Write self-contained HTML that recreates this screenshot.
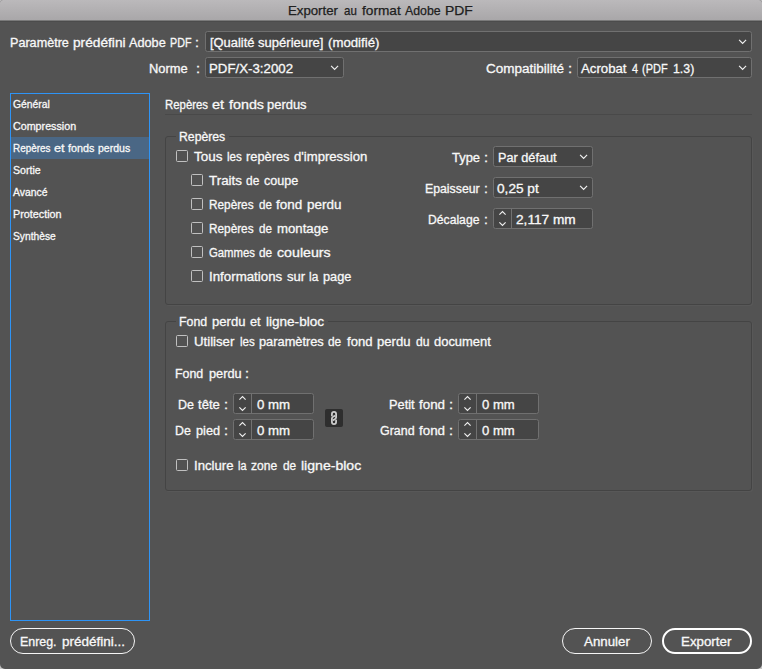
<!DOCTYPE html>
<html lang="fr">
<head>
<meta charset="utf-8">
<title>Exporter au format Adobe PDF</title>
<style>
html,body{margin:0;padding:0;}
body{width:762px;height:669px;overflow:hidden;background:#c4c4c4;font-family:"Liberation Sans",sans-serif;}
#win{position:absolute;left:0;top:0;width:762px;height:669px;background:#535353;border-radius:3px 3px 5px 5px;overflow:hidden;}
#tb{position:absolute;left:0;top:0;width:762px;height:20px;background:linear-gradient(#bbb9bb,#a9a7a9);}
#tb1{position:absolute;left:0;top:20px;width:762px;height:1px;background:#7a7a7a;}
#tb2{position:absolute;left:0;top:21px;width:762px;height:1px;background:#4c4c4c;}
.t{position:absolute;white-space:nowrap;line-height:16px;height:16px;color:#f8f8f8;transform-origin:0 0;-webkit-text-stroke:0.3px #f8f8f8;}
.tt{-webkit-text-stroke:0.25px #202020;}
.sel,.inp{position:absolute;box-sizing:border-box;height:21px;background:#454545;border:1px solid #707070;border-radius:2.5px;}
.chev{position:absolute;right:3px;top:7px;width:10px;height:7px;}
.chev path,.spin path{fill:none;stroke:#f0f0f0;stroke-width:1.15;}
.spin{position:absolute;left:0;top:0;width:17px;height:19px;border-right:1px solid #727272;}
.spin svg{display:block;}
.cb{position:absolute;width:12px;height:12px;box-sizing:border-box;border:1px solid #c0c0c0;border-radius:1.5px;background:#525252;}
.grp{position:absolute;box-sizing:border-box;border:1px solid #444;border-radius:3px;box-shadow:1px 1px 0 rgba(255,255,255,0.03);}
.gl{position:absolute;background:#535353;height:5px;}
.sep{position:absolute;height:1px;background:#494949;}
#list{position:absolute;left:10px;top:93px;width:140px;height:528px;box-sizing:border-box;border:1px solid #2e94f6;}
#list .hl{position:absolute;left:0;top:43px;width:138px;height:22px;background:#4a6785;}
.btn{position:absolute;box-sizing:border-box;height:26px;border:1px solid #f6f6f6;border-radius:13px;}
.b2{border-width:2px;border-color:#ffffff;}
.lnk{position:absolute;left:325px;top:409px;width:18px;height:18px;background:#2e2e2e;border-radius:2px;}
.lnk svg{display:block;}
.lnk path{fill:none;stroke:#cccccc;stroke-width:1.8;stroke-linecap:round;}
</style>
</head>
<body>
<div id="win">
<div id="tb"></div><div id="tb1"></div><div id="tb2"></div>
<div class="sel" style="left:205px;top:31px;width:547px;"><svg class="chev" viewBox="0 0 10 7"><path d="M1.1 0.8 L4.6 4.4 L8.1 0.8"/></svg></div>
<div class="sel" style="left:205px;top:57px;width:139px;"><svg class="chev" viewBox="0 0 10 7"><path d="M1.1 0.8 L4.6 4.4 L8.1 0.8"/></svg></div>
<div class="sel" style="left:577px;top:57px;width:175px;"><svg class="chev" viewBox="0 0 10 7"><path d="M1.1 0.8 L4.6 4.4 L8.1 0.8"/></svg></div>
<div id="list"><div class="hl"></div></div>
<div class="sep" style="left:165px;top:114px;width:587px;"></div>
<div class="grp" style="left:165px;top:136px;width:587px;height:169px;"></div><div class="gl" style="left:176px;top:134px;width:53px;"></div>
<div class="cb" style="left:176px;top:150px;"></div>
<div class="cb" style="left:191px;top:174px;"></div>
<div class="cb" style="left:191px;top:198px;"></div>
<div class="cb" style="left:191px;top:222px;"></div>
<div class="cb" style="left:191px;top:246px;"></div>
<div class="cb" style="left:191px;top:270px;"></div>
<div class="sel" style="left:493px;top:146px;width:100px;"><svg class="chev" viewBox="0 0 10 7"><path d="M1.1 0.8 L4.6 4.4 L8.1 0.8"/></svg></div>
<div class="sel" style="left:493px;top:177px;width:100px;"><svg class="chev" viewBox="0 0 10 7"><path d="M1.1 0.8 L4.6 4.4 L8.1 0.8"/></svg></div>
<div class="inp" style="left:493px;top:208px;width:100px;"><div class="spin"><svg width="17" height="19" viewBox="0 0 17 19"><path d="M5.4 5.6 L8.5 2.6 L11.6 5.6 M5.4 13.4 L8.5 16.5 L11.6 13.4"/></svg></div></div>
<div class="grp" style="left:165px;top:321px;width:587px;height:170px;"></div><div class="gl" style="left:176px;top:319px;width:152px;"></div>
<div class="cb" style="left:176px;top:335px;"></div>
<div class="cb" style="left:176px;top:459px;"></div>
<div class="inp" style="left:233px;top:393px;width:81px;"><div class="spin"><svg width="17" height="19" viewBox="0 0 17 19"><path d="M5.4 5.6 L8.5 2.6 L11.6 5.6 M5.4 13.4 L8.5 16.5 L11.6 13.4"/></svg></div></div>
<div class="inp" style="left:233px;top:419px;width:81px;"><div class="spin"><svg width="17" height="19" viewBox="0 0 17 19"><path d="M5.4 5.6 L8.5 2.6 L11.6 5.6 M5.4 13.4 L8.5 16.5 L11.6 13.4"/></svg></div></div>
<div class="inp" style="left:458px;top:393px;width:81px;"><div class="spin"><svg width="17" height="19" viewBox="0 0 17 19"><path d="M5.4 5.6 L8.5 2.6 L11.6 5.6 M5.4 13.4 L8.5 16.5 L11.6 13.4"/></svg></div></div>
<div class="inp" style="left:458px;top:419px;width:81px;"><div class="spin"><svg width="17" height="19" viewBox="0 0 17 19"><path d="M5.4 5.6 L8.5 2.6 L11.6 5.6 M5.4 13.4 L8.5 16.5 L11.6 13.4"/></svg></div></div>
<div class="lnk"><svg width="18" height="18" viewBox="0 0 18 18"><path d="M6.9 6.6 V5.0 a2.1 2.1 0 0 1 4.2 0 V8.4 C11.1 10.0 9.6 10.2 8.5 11.0"/><path d="M11.1 11.4 V13.0 a2.1 2.1 0 0 1 -4.2 0 V9.6 C6.9 8.0 8.4 7.8 9.5 7.0"/></svg></div>
<div class="btn" style="left:10px;top:628px;width:125px;"></div>
<div class="btn" style="left:562px;top:628px;width:90px;"></div>
<div class="btn b2" style="left:662px;top:628px;width:90px;"></div>
<span class="t tt" style="left:287.83px;top:3.00px;font-size:13px;transform:scaleX(1.0164);color:#202020;">Exporter </span><span class="t tt" style="left:343.65px;top:3.00px;font-size:13px;transform:scaleX(0.8855);color:#202020;">au </span><span class="t tt" style="left:361.75px;top:3.00px;font-size:13px;transform:scaleX(1.0502);color:#202020;">format </span><span class="t tt" style="left:405.35px;top:3.00px;font-size:13px;transform:scaleX(0.9475);color:#202020;">Adobe </span><span class="t tt" style="left:444.68px;top:3.00px;font-size:13px;transform:scaleX(1.0695);color:#202020;">PDF</span>
<span class="t" style="left:10.04px;top:35.00px;font-size:12.5px;transform:scaleX(1.0086);">Paramètre </span><span class="t" style="left:72.85px;top:35.00px;font-size:12.5px;transform:scaleX(1.0960);">prédéfini </span><span class="t" style="left:128.95px;top:35.00px;font-size:12.5px;transform:scaleX(1.0168);">Adobe </span><span class="t" style="left:169.69px;top:35.00px;font-size:12.5px;transform:scaleX(0.8578);">PDF </span><span class="t" style="left:195.44px;top:35.00px;font-size:12.5px;transform:scaleX(1.1309);">:</span>
<span class="t" style="left:209.85px;top:35.00px;font-size:12.5px;transform:scaleX(1.0318);">[Qualité </span><span class="t" style="left:258.05px;top:35.00px;font-size:12.5px;transform:scaleX(1.0457);">supérieure] </span><span class="t" style="left:328.05px;top:35.00px;font-size:12.5px;transform:scaleX(1.0566);">(modifié)</span>
<span class="t" style="left:148.82px;top:61.00px;font-size:12.5px;transform:scaleX(1.0313);">Norme </span><span class="t" style="left:195.89px;top:61.00px;font-size:12.5px;transform:scaleX(1.1793);">:</span>
<span class="t" style="left:208.59px;top:61.00px;font-size:12.5px;transform:scaleX(1.0607);">PDF/X-3:2002</span>
<span class="t" style="left:486.05px;top:61.00px;font-size:12.5px;transform:scaleX(1.0802);">Compatibilité </span><span class="t" style="left:567.61px;top:61.00px;font-size:12.5px;transform:scaleX(1.1960);">:</span>
<span class="t" style="left:581.05px;top:61.00px;font-size:12.5px;transform:scaleX(1.0572);">Acrobat </span><span class="t" style="left:631.96px;top:61.00px;font-size:12.5px;transform:scaleX(0.8685);">4 </span><span class="t" style="left:642.05px;top:61.00px;font-size:12.5px;transform:scaleX(0.8772);">(PDF </span><span class="t" style="left:672.65px;top:61.00px;font-size:12.5px;transform:scaleX(0.9871);">1.3)</span>
<span class="t" style="left:13.05px;top:96.00px;font-size:11px;transform:scaleX(0.9408);">Général</span>
<span class="t" style="left:13.05px;top:118.00px;font-size:11px;transform:scaleX(0.9740);">Compression</span>
<span class="t" style="left:13.15px;top:140.00px;font-size:11px;transform:scaleX(0.9007);">Repères </span><span class="t" style="left:54.15px;top:140.00px;font-size:11px;transform:scaleX(1.1516);">et </span><span class="t" style="left:67.85px;top:140.00px;font-size:11px;transform:scaleX(0.9814);">fonds </span><span class="t" style="left:98.45px;top:140.00px;font-size:11px;transform:scaleX(0.9580);">perdus</span>
<span class="t" style="left:13.05px;top:162.00px;font-size:11px;transform:scaleX(0.9644);">Sortie</span>
<span class="t" style="left:12.75px;top:184.00px;font-size:11px;transform:scaleX(0.9457);">Avancé</span>
<span class="t" style="left:13.15px;top:206.00px;font-size:11px;transform:scaleX(0.9816);">Protection</span>
<span class="t" style="left:13.05px;top:228.00px;font-size:11px;transform:scaleX(0.9334);">Synthèse</span>
<span class="t" style="left:165.14px;top:97.00px;font-size:12.5px;transform:scaleX(0.9109);">Repères </span><span class="t" style="left:211.55px;top:97.00px;font-size:12.5px;transform:scaleX(1.1596);">et </span><span class="t" style="left:229.15px;top:97.00px;font-size:12.5px;transform:scaleX(1.1441);">fonds </span><span class="t" style="left:267.05px;top:97.00px;font-size:12.5px;transform:scaleX(1.0350);">perdus</span>
<span class="t" style="left:178.97px;top:129.00px;font-size:12.5px;transform:scaleX(0.9783);">Repères</span>
<span class="t" style="left:193.75px;top:149.00px;font-size:12.5px;transform:scaleX(1.0744);">Tous </span><span class="t" style="left:226.95px;top:149.00px;font-size:12.5px;transform:scaleX(0.9282);">les </span><span class="t" style="left:246.25px;top:149.00px;font-size:12.5px;transform:scaleX(1.0253);">repères </span><span class="t" style="left:294.35px;top:149.00px;font-size:12.5px;transform:scaleX(1.0498);">d'impression</span>
<span class="t" style="left:208.85px;top:173.00px;font-size:12.5px;transform:scaleX(1.0709);">Traits </span><span class="t" style="left:246.45px;top:173.00px;font-size:12.5px;transform:scaleX(0.9533);">de </span><span class="t" style="left:264.45px;top:173.00px;font-size:12.5px;transform:scaleX(1.0086);">coupe</span>
<span class="t" style="left:209.11px;top:197.00px;font-size:12.5px;transform:scaleX(0.9435);">Repères </span><span class="t" style="left:258.65px;top:197.00px;font-size:12.5px;transform:scaleX(0.9318);">de </span><span class="t" style="left:276.15px;top:197.00px;font-size:12.5px;transform:scaleX(1.0748);">fond </span><span class="t" style="left:306.75px;top:197.00px;font-size:12.5px;transform:scaleX(1.0775);">perdu</span>
<span class="t" style="left:209.11px;top:221.00px;font-size:12.5px;transform:scaleX(0.9435);">Repères </span><span class="t" style="left:258.65px;top:221.00px;font-size:12.5px;transform:scaleX(0.9318);">de </span><span class="t" style="left:276.85px;top:221.00px;font-size:12.5px;transform:scaleX(1.0556);">montage</span>
<span class="t" style="left:208.95px;top:245.00px;font-size:12.5px;transform:scaleX(0.9058);">Gammes </span><span class="t" style="left:258.95px;top:245.00px;font-size:12.5px;transform:scaleX(0.9461);">de </span><span class="t" style="left:276.85px;top:245.00px;font-size:12.5px;transform:scaleX(1.1362);">couleurs</span>
<span class="t" style="left:209.19px;top:269.00px;font-size:12.5px;transform:scaleX(1.0647);">Informations </span><span class="t" style="left:286.65px;top:269.00px;font-size:12.5px;transform:scaleX(1.0464);">sur </span><span class="t" style="left:309.05px;top:269.00px;font-size:12.5px;transform:scaleX(0.9512);">la </span><span class="t" style="left:322.85px;top:269.00px;font-size:12.5px;transform:scaleX(1.0195);">page</span>
<span class="t" style="left:451.85px;top:150.00px;font-size:12.5px;transform:scaleX(1.0351);">Type </span><span class="t" style="left:483.55px;top:150.00px;font-size:12.5px;transform:scaleX(1.1763);">:</span>
<span class="t" style="left:497.63px;top:150.00px;font-size:12.5px;transform:scaleX(1.0156);">Par défaut</span>
<span class="t" style="left:424.87px;top:181.00px;font-size:12.5px;transform:scaleX(0.9831);">Epaisseur </span><span class="t" style="left:483.68px;top:181.00px;font-size:12.5px;transform:scaleX(1.1116);">:</span>
<span class="t" style="left:496.75px;top:181.00px;font-size:12.5px;transform:scaleX(1.0915);">0,25 pt</span>
<span class="t" style="left:427.88px;top:212.00px;font-size:12.5px;transform:scaleX(0.9737);">Décalage </span><span class="t" style="left:483.68px;top:212.00px;font-size:12.5px;transform:scaleX(1.1078);">:</span>
<span class="t" style="left:516.45px;top:212.00px;font-size:12.5px;transform:scaleX(1.0933);">2,117 mm</span>
<span class="t" style="left:178.86px;top:314.00px;font-size:12.5px;transform:scaleX(0.9877);">Fond </span><span class="t" style="left:212.25px;top:314.00px;font-size:12.5px;transform:scaleX(1.0463);">perdu </span><span class="t" style="left:250.05px;top:314.00px;font-size:12.5px;transform:scaleX(1.0135);">et </span><span class="t" style="left:265.85px;top:314.00px;font-size:12.5px;transform:scaleX(1.0835);">ligne-bloc</span>
<span class="t" style="left:194.25px;top:334.00px;font-size:12.5px;transform:scaleX(1.0570);">Utiliser </span><span class="t" style="left:239.65px;top:334.00px;font-size:12.5px;transform:scaleX(0.9219);">les </span><span class="t" style="left:259.15px;top:334.00px;font-size:12.5px;transform:scaleX(1.0243);">paramètres </span><span class="t" style="left:328.25px;top:334.00px;font-size:12.5px;transform:scaleX(0.9461);">de </span><span class="t" style="left:346.55px;top:334.00px;font-size:12.5px;transform:scaleX(1.0461);">fond </span><span class="t" style="left:377.25px;top:334.00px;font-size:12.5px;transform:scaleX(1.0463);">perdu </span><span class="t" style="left:415.95px;top:334.00px;font-size:12.5px;transform:scaleX(0.9676);">du </span><span class="t" style="left:434.15px;top:334.00px;font-size:12.5px;transform:scaleX(1.0357);">document</span>
<span class="t" style="left:175.06px;top:366.00px;font-size:12.5px;transform:scaleX(0.9913);">Fond </span><span class="t" style="left:208.55px;top:366.00px;font-size:12.5px;transform:scaleX(1.0213);">perdu </span><span class="t" style="left:244.51px;top:366.00px;font-size:12.5px;transform:scaleX(1.1458);">:</span>
<span class="t" style="left:177.75px;top:397.00px;font-size:12.5px;transform:scaleX(0.9982);">De </span><span class="t" style="left:198.25px;top:397.00px;font-size:12.5px;transform:scaleX(1.0480);">tête </span><span class="t" style="left:223.76px;top:397.00px;font-size:12.5px;transform:scaleX(1.1703);">:</span>
<span class="t" style="left:256.95px;top:397.00px;font-size:12.5px;transform:scaleX(1.0572);">0 mm</span>
<span class="t" style="left:175.16px;top:423.00px;font-size:12.5px;transform:scaleX(0.9915);">De </span><span class="t" style="left:195.85px;top:423.00px;font-size:12.5px;transform:scaleX(1.0177);">pied </span><span class="t" style="left:223.77px;top:423.00px;font-size:12.5px;transform:scaleX(1.1644);">:</span>
<span class="t" style="left:256.95px;top:423.00px;font-size:12.5px;transform:scaleX(1.0572);">0 mm</span>
<span class="t" style="left:389.43px;top:397.00px;font-size:12.5px;transform:scaleX(1.0228);">Petit </span><span class="t" style="left:418.75px;top:397.00px;font-size:12.5px;transform:scaleX(1.0707);">fond </span><span class="t" style="left:448.63px;top:397.00px;font-size:12.5px;transform:scaleX(1.1871);">:</span>
<span class="t" style="left:481.95px;top:397.00px;font-size:12.5px;transform:scaleX(1.0474);">0 mm</span>
<span class="t" style="left:379.55px;top:423.00px;font-size:12.5px;transform:scaleX(0.9946);">Grand </span><span class="t" style="left:418.75px;top:423.00px;font-size:12.5px;transform:scaleX(1.0707);">fond </span><span class="t" style="left:448.67px;top:423.00px;font-size:12.5px;transform:scaleX(1.1635);">:</span>
<span class="t" style="left:481.95px;top:423.00px;font-size:12.5px;transform:scaleX(1.0474);">0 mm</span>
<span class="t" style="left:194.00px;top:458.00px;font-size:12.5px;transform:scaleX(1.0529);">Inclure </span><span class="t" style="left:238.25px;top:458.00px;font-size:12.5px;transform:scaleX(0.8694);">la </span><span class="t" style="left:251.45px;top:458.00px;font-size:12.5px;transform:scaleX(0.9649);">zone </span><span class="t" style="left:282.65px;top:458.00px;font-size:12.5px;transform:scaleX(0.9461);">de </span><span class="t" style="left:301.05px;top:458.00px;font-size:12.5px;transform:scaleX(1.1248);">ligne-bloc</span>
<span class="t" style="left:19.96px;top:634.00px;font-size:12.5px;transform:scaleX(0.9928);">Enreg. </span><span class="t" style="left:61.55px;top:634.00px;font-size:12.5px;transform:scaleX(1.0795);">prédéfini...</span>
<span class="t" style="left:583.75px;top:634.00px;font-size:12.5px;transform:scaleX(1.0647);">Annuler</span>
<span class="t" style="left:681.48px;top:634.00px;font-size:12.5px;transform:scaleX(1.0656);">Exporter</span>
</div>
</body>
</html>
